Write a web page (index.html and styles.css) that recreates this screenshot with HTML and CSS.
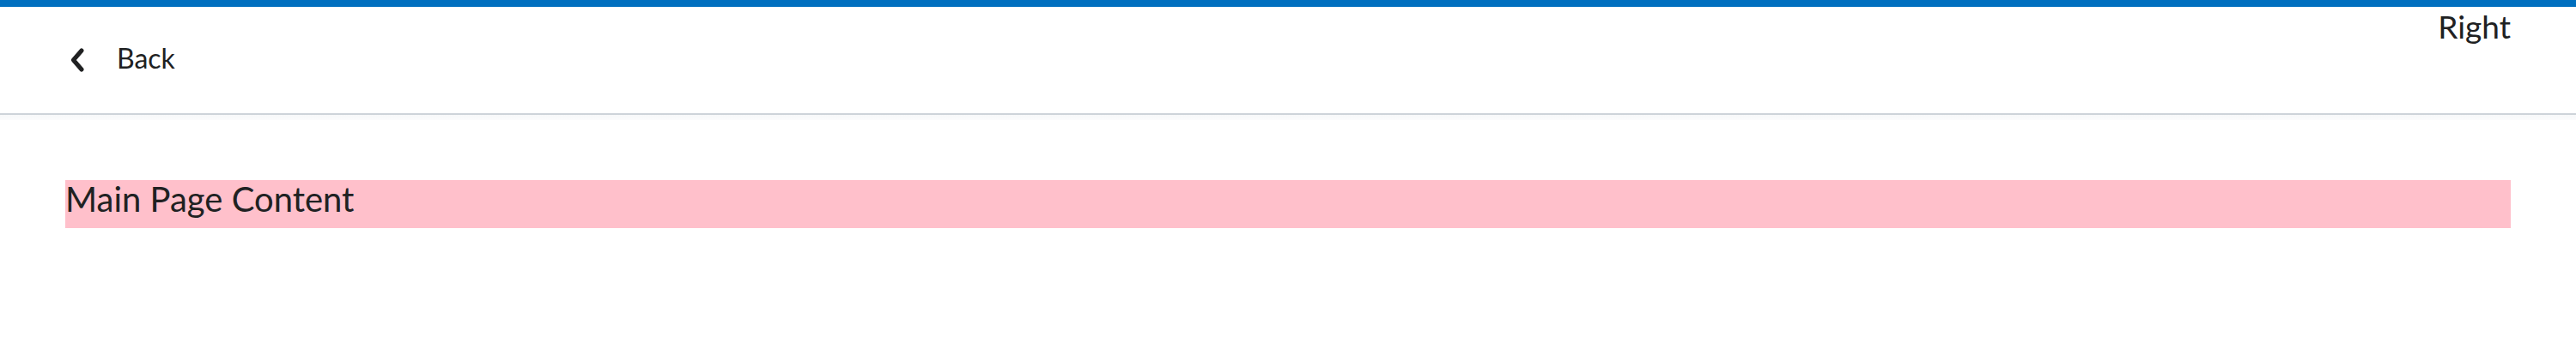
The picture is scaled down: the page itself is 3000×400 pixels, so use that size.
FILE: index.html
```html
<!DOCTYPE html>
<html>
<head>
<meta charset="utf-8">
<link rel="stylesheet" href="styles.css">
</head>
<body>
<div class="top-bar"></div>
<header class="nav">
  <a class="back" href="#">
    <svg class="chevron" width="16" height="28" viewBox="0 0 16 28"><path d="M13 3 L3.5 14 L13 25" fill="none" stroke="#202122" stroke-width="5" stroke-linecap="round" stroke-linejoin="round"/></svg>
    <span class="back-text">Back</span>
  </a>
  <div class="right">Right</div>
</header>
<div class="shadow"></div>
<main class="main">
  <div class="content">Main Page Content</div>
</main>
</body>
</html>
```
FILE: styles.css
```css
html, body {
  margin: 0;
  padding: 0;
  background: #ffffff;
  font-family: "Lato", sans-serif;
  color: #202122;
}
.top-bar {
  height: 8px;
  background: #006fbf;
}
.nav {
  height: 124px;
  border-bottom: 2px solid #cdd3d9;
  display: flex;
  justify-content: space-between;
  align-items: flex-start;
  padding: 0 76px 0 82px;
}
.back {
  display: flex;
  align-items: center;
  height: 124px;
  text-decoration: none;
  color: #202122;
}
.chevron {
  display: block;
  flex: none;
}
.back-text {
  margin-left: 38px;
  margin-bottom: 4px;
  font-size: 32px;
  line-height: 40px;
}
.right {
  font-size: 37px;
  line-height: 40px;
  margin-top: 3px;
}
.shadow {
  height: 6px;
  background: linear-gradient(#f7f8f9, #fbfbfc);
}
.main {
  padding: 70px 76px 0 76px;
}
.content {
  background: #ffc0cb;
  height: 56px;
  font-size: 40px;
  line-height: 45px;
}
```
